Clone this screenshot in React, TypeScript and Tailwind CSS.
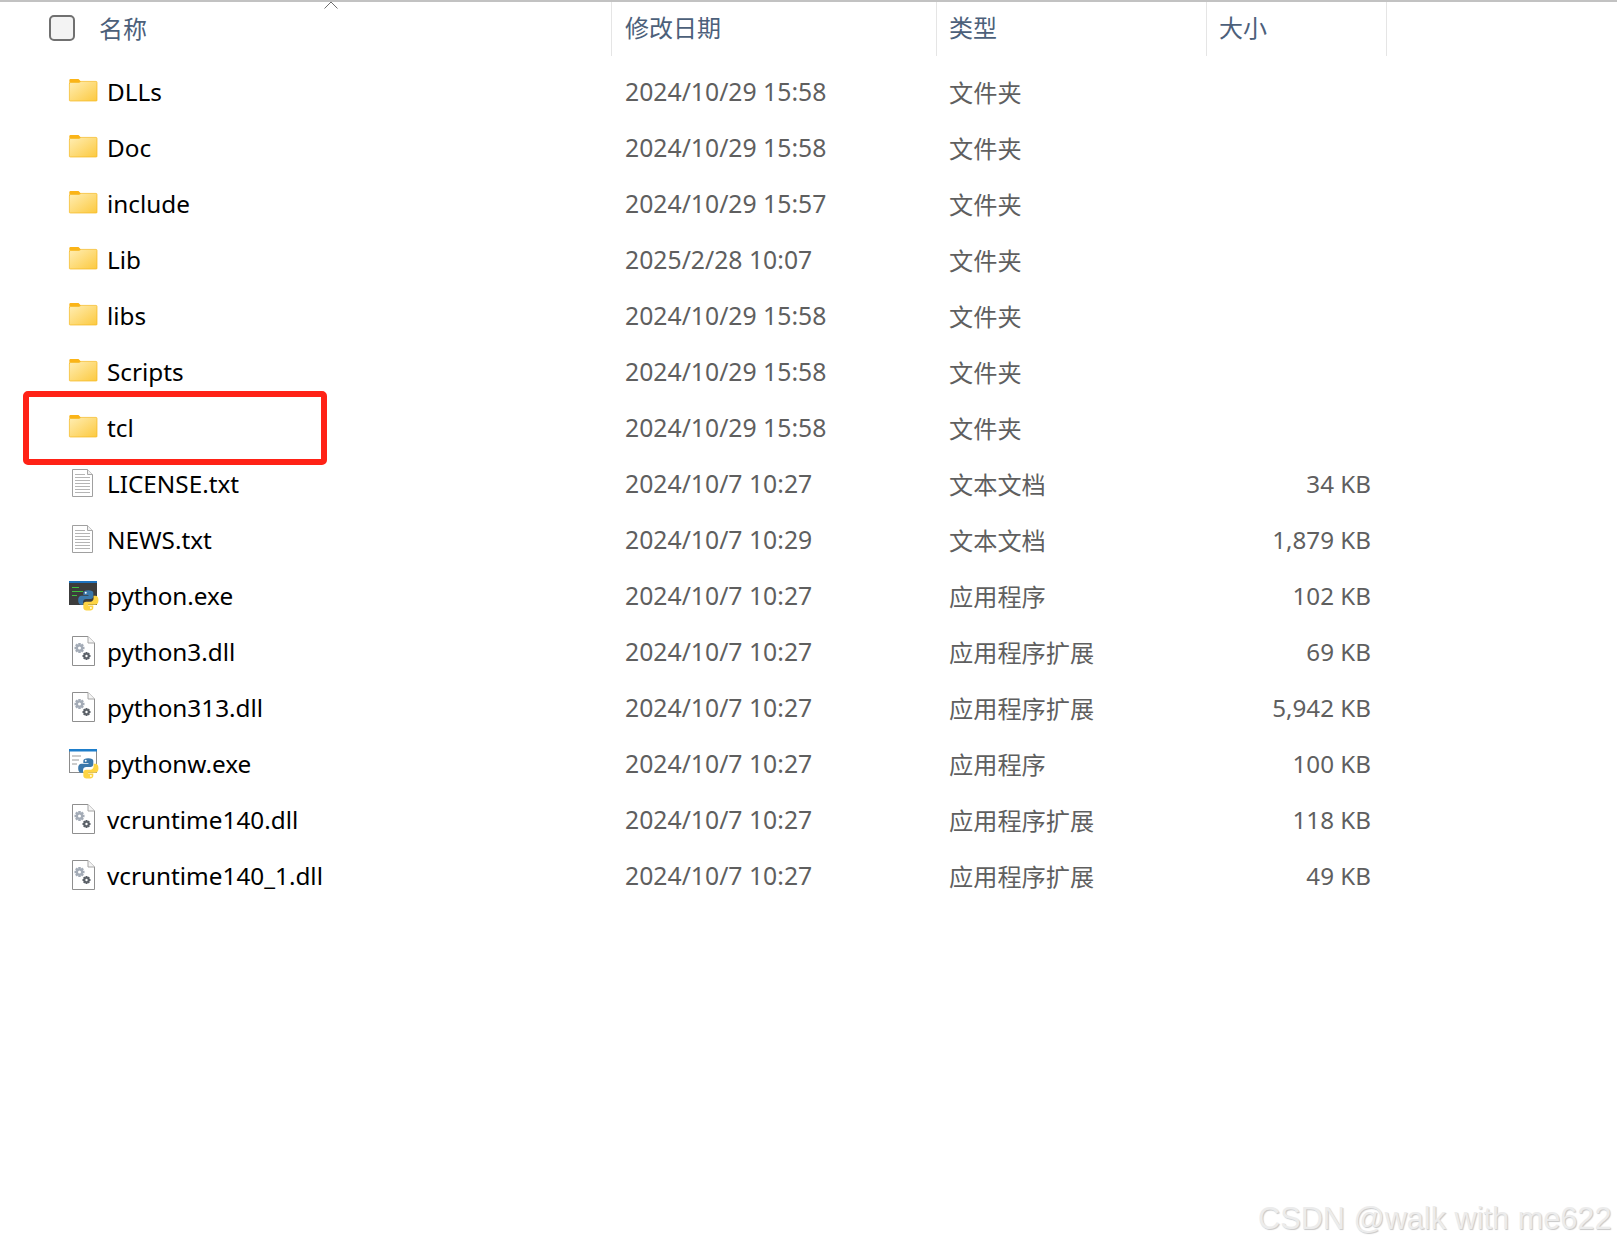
const FONT = "font-['Noto_Sans','Noto_Sans_CJK_SC',sans-serif]";

type Kind = 'folder' | 'txt' | 'exe' | 'exew' | 'dll';
const rows: { n: string; d: string; t: string; s: string; k: Kind }[] = [
  { n: 'DLLs', d: '2024/10/29 15:58', t: '文件夹', s: '', k: 'folder' },
  { n: 'Doc', d: '2024/10/29 15:58', t: '文件夹', s: '', k: 'folder' },
  { n: 'include', d: '2024/10/29 15:57', t: '文件夹', s: '', k: 'folder' },
  { n: 'Lib', d: '2025/2/28 10:07', t: '文件夹', s: '', k: 'folder' },
  { n: 'libs', d: '2024/10/29 15:58', t: '文件夹', s: '', k: 'folder' },
  { n: 'Scripts', d: '2024/10/29 15:58', t: '文件夹', s: '', k: 'folder' },
  { n: 'tcl', d: '2024/10/29 15:58', t: '文件夹', s: '', k: 'folder' },
  { n: 'LICENSE.txt', d: '2024/10/7 10:27', t: '文本文档', s: '34 KB', k: 'txt' },
  { n: 'NEWS.txt', d: '2024/10/7 10:29', t: '文本文档', s: '1,879 KB', k: 'txt' },
  { n: 'python.exe', d: '2024/10/7 10:27', t: '应用程序', s: '102 KB', k: 'exe' },
  { n: 'python3.dll', d: '2024/10/7 10:27', t: '应用程序扩展', s: '69 KB', k: 'dll' },
  { n: 'python313.dll', d: '2024/10/7 10:27', t: '应用程序扩展', s: '5,942 KB', k: 'dll' },
  { n: 'pythonw.exe', d: '2024/10/7 10:27', t: '应用程序', s: '100 KB', k: 'exew' },
  { n: 'vcruntime140.dll', d: '2024/10/7 10:27', t: '应用程序扩展', s: '118 KB', k: 'dll' },
  { n: 'vcruntime140_1.dll', d: '2024/10/7 10:27', t: '应用程序扩展', s: '49 KB', k: 'dll' },
];

const SNAKE =
  'M11.9 .2C8 .2 6.2 1.3 6.2 3.2V5.9H12.2V6.8H3.9C1.6 6.8 .2 8.6 .2 12C.2 15.4 1.6 17.2 3.6 17.2H5.9V14C5.9 11.8 7.6 10.4 9.5 10.4H14.6C16.4 10.4 17.8 9.2 17.8 7.3V3.2C17.8 1.3 15.8 .2 11.9 .2Z';

function Python() {
  return (
    <g transform="translate(9 9) scale(.86)">
      <path d={SNAKE} fill="#3b78ab" />
      <circle cx="9" cy="3.2" r="1.1" fill="#fff" />
      <g transform="rotate(180 12 12)">
        <path d={SNAKE} fill="#fdd443" />
        <circle cx="9" cy="3.2" r="1.1" fill="#fff" />
      </g>
    </g>
  );
}

function Gear({ cx, cy, r, c }: { cx: number; cy: number; r: number; c: string }) {
  const t = r * 0.5;
  return (
    <g>
      {[0, 45, 90, 135].map((a) => (
        <rect
          key={a}
          x={cx - t / 2}
          y={cy - r}
          width={t}
          height={r * 2}
          fill={c}
          transform={`rotate(${a} ${cx} ${cy})`}
        />
      ))}
      <circle cx={cx} cy={cy} r={r * 0.72} fill={c} />
      <circle cx={cx} cy={cy} r={r * 0.3} fill="#fff" />
    </g>
  );
}

function Icon({ k }: { k: Kind }) {
  const base = 'w-[30px] h-[30px] shrink-0 overflow-visible';
  if (k === 'folder')
    return (
      <svg viewBox="0 0 30 30" className={base}>
        <defs>
          <linearGradient id="fg" x1="0" y1="0" x2="1" y2="1">
            <stop offset="0" stopColor="#ffeeb4" />
            <stop offset="1" stopColor="#fcc93f" />
          </linearGradient>
        </defs>
        <path d="M.4 3.2Q.4 2 1.4 2H9.5L12 4.6V7H.4Z" fill="#fbb417" />
        <path d="M.4 7Q.4 5.8 1.4 5.4L10 5.4L12 4.4H27Q28 4.4 28 5.4V23.4Q28 24 27 24H1.4Q.4 24 .4 23.4Z" fill="url(#fg)" stroke="#f5b81f" strokeWidth=".7" />
      </svg>
    );
  if (k === 'txt')
    return (
      <svg viewBox="0 0 30 30" className={base}>
        <path d="M3.5 .5H18.5L23.5 5.5V27.5H3.5Z" fill="#fff" stroke="#a0a0a0" />
        <path d="M18.5 .5V5.5H23.5" fill="#f0f0f0" stroke="#a8a8a8" />
        <path
          d="M6 5.5H16M6 8.5H21M6 11.5H21M6 14.5H21M6 17.5H21M6 20.5H21M6 23.5H21"
          stroke="#b5b5b5"
          strokeWidth="1.2"
        />
      </svg>
    );
  if (k === 'dll')
    return (
      <svg viewBox="0 0 30 30" className={base}>
        <path d="M3.5 -.5H19L25.5 6V28.5H3.5Z" fill="#fff" stroke="#8f8f8f" />
        <path d="M19 -.5V6H25.5" fill="#f4f4f4" stroke="#a5a5a5" />
        <Gear cx={10.5} cy={11} r={5} c="#a3abb6" />
        <Gear cx={17.5} cy={19} r={4} c="#5b6168" />
      </svg>
    );
  if (k === 'exe')
    return (
      <svg viewBox="0 0 30 30" className={base}>
        <rect x="0" y="0" width="28" height="24" fill="#3c3c3c" />
        <rect x="0" y="0" width="28" height="2" fill="#1e72bd" />
        <path d="M3 6.5H10M3 10.5H14M3 14.5H8" stroke="#3fbf3f" strokeWidth="1.2" />
        <Python />
      </svg>
    );
  return (
    <svg viewBox="0 0 30 30" className={base}>
      <rect x=".5" y=".5" width="27" height="23" fill="#fff" stroke="#8c8c8c" />
      <rect x="0" y="0" width="28" height="2.5" fill="#1e7ecb" />
      <path d="M3 7H12M3 11H10M3 15H8" stroke="#9a9a9a" strokeWidth="1.2" />
      <Python />
    </svg>
  );
}

export default function App() {
  return (
    <div className={`relative h-[1247px] w-[1617px] overflow-hidden bg-white ${FONT}`}>
      <div className="h-[2px] bg-[#c2c2c2]" />
      <div className="grid h-[54px] grid-cols-[612px_325px_270px_180px] text-[24px] leading-[51px] text-[#4c607a]">
        <div className="flex items-center border-r border-[#e5e5e5]">
          <span className="ml-[49px] mt-[-2px] h-[26px] w-[26px] rounded-[5px] border-2 border-[#707070] bg-[#f3f3f3]" />
          <span className="ml-6 mt-[-2px]">名称</span>
        </div>
        <div className="border-r border-[#e5e5e5] pl-[13px]">修改日期</div>
        <div className="border-r border-[#e5e5e5] pl-3">类型</div>
        <div className="border-r border-[#e5e5e5] pl-3">大小</div>
      </div>
      <svg viewBox="0 0 14 8" className="absolute left-[324px] top-[1px] h-2 w-[14px]">
        <path d="M.5 7.5L7 1L13.5 7.5" fill="none" stroke="#6e6e6e" />
      </svg>
      <div className="mt-2 flex flex-col">
        {rows.map((r) => (
          <div key={r.n} className="grid h-14 grid-cols-[612px_325px_270px_180px] items-center">
            <div className="flex items-center pl-[69px] text-[24.3px] text-black">
              <Icon k={r.k} />
              <span className="ml-2 whitespace-nowrap">{r.n}</span>
            </div>
            <div className="pl-[13px] text-[24.75px] text-[#5f5f5f]">{r.d}</div>
            <div className="pl-3 pt-[2px] text-[24.2px] text-[#5f5f5f]">{r.t}</div>
            <div className="pr-4 text-right text-[24.2px] text-[#5f5f5f]">{r.s}</div>
          </div>
        ))}
      </div>
      <div className="absolute left-[23px] top-[391px] h-[74px] w-[304px] rounded-[5px] border-[6px] border-[#ff2216]" />
      <div className="absolute left-[1258px] top-[1199px] whitespace-nowrap font-['Liberation_Sans',sans-serif] text-[30.7px] leading-[40px] text-[#ececec] [text-shadow:1px_1px_1px_#c8c8c8]">
        CSDN @walk with me622
      </div>
    </div>
  );
}
